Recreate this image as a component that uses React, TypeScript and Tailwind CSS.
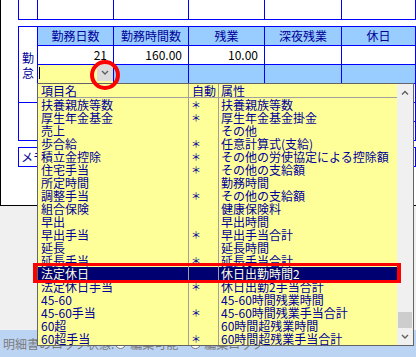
import React from 'react';

// 項目名 / 自動 / 属性
const items: [string, string, string][] = [
  ['扶養親族等数', '*', '扶養親族等数'],
  ['厚生年金基金', '*', '厚生年金基金掛金'],
  ['売上', '', 'その他'],
  ['歩合給', '*', '任意計算式(支給)'],
  ['積立金控除', '*', 'その他の労使協定による控除額'],
  ['住宅手当', '*', 'その他の支給額'],
  ['所定時間', '', '勤務時間'],
  ['調整手当', '*', 'その他の支給額'],
  ['組合保険', '', '健康保険料'],
  ['早出', '', '早出時間'],
  ['早出手当', '*', '早出手当合計'],
  ['延長', '', '延長時間'],
  ['延長手当', '*', '延長手当合計'],
  ['法定休日', '', '休日出勤時間2'],
  ['法定休日手当', '*', '休日出勤2手当合計'],
  ['45-60', '', '45-60時間残業時間'],
  ['45-60手当', '*', '45-60時間残業手当合計'],
  ['60超', '', '60時間超残業時間'],
  ['60超手当', '*', '60時間超残業手当合計'],
];

const selectedIndex = 13;

const headers = ['勤務日数', '勤務時間数', '残業', '深夜残業', '休日'];
const values = ['21', '160.00', '10.00', '', ''];

const Chevron = ({ up }: { up?: boolean }) => (
  <svg width="8" height="5" viewBox="0 0 8 5">
    <polyline
      points={up ? '1,4.5 4,1.5 7,4.5' : '1,1 4,4 7,1'}
      fill="none"
      stroke="#606060"
      strokeWidth="1.4"
    />
  </svg>
);

const Radio = () => (
  <span className="mt-[1px] block h-[11px] w-[11px] rounded-full border border-[#7a7a7a] bg-white" />
);

export default function App() {
  return (
    <div className="relative flex h-[357px] w-[416px] flex-col overflow-hidden bg-[#f0f0f0] font-['Noto_Sans_CJK_JP',sans-serif] text-[12px] leading-[13px]">
      {/* form panel */}
      <div className="h-[206px] border-b border-l border-black bg-white">
        {/* block above, cut off at the top */}
        <div className="ml-[17px] grid w-[398px] grid-cols-[18px_75px_74px_75px_76px_73px] gap-px bg-[#0000ff] px-px pb-px">
          {Array.from({ length: 6 }).map((_, i) => (
            <div key={i} className="h-[19px] bg-white" />
          ))}
        </div>

        {/* 勤怠 table */}
        <div className="ml-[17px] mt-[6px] grid w-[398px] auto-rows-[18px] grid-cols-[18px_75px_74px_75px_76px_73px] gap-px bg-[#0000ff] p-px">
          <div className="row-span-4 flex flex-col items-center justify-center bg-white pt-[1px] text-[#000099] leading-[15px]">
            <span>勤</span>
            <span>怠</span>
          </div>
          {headers.map((h) => (
            <div key={h} className="bg-[#99ccff] text-center leading-[18px] text-[#000099]">
              {h}
            </div>
          ))}
          {values.map((v, i) => (
            <div key={i} className="bg-white pr-[6px] text-right leading-[18px] text-black">
              {v}
            </div>
          ))}
          <div className="flex bg-[#ffff99]">
            <span className="ml-[1px] mt-[2px] h-[12px] w-px bg-black" />
            <div className="ml-auto flex h-[17px] w-[16px] -translate-y-px items-center justify-center bg-[#dcdcdc]">
              <Chevron />
            </div>
          </div>
          {Array.from({ length: 4 }).map((_, i) => (
            <div key={i} className="bg-[#99ccff]" />
          ))}
          {Array.from({ length: 5 }).map((_, i) => (
            <div key={i} className="bg-white" />
          ))}
          <div className="row-span-2 bg-white" />
          {Array.from({ length: 10 }).map((_, i) => (
            <div key={i} className="bg-white" />
          ))}
        </div>

        {/* memo */}
        <div className="ml-[17px] mt-[6px] h-[20px] w-[398px] border border-[#0000ff] pl-[2px] leading-[18px] text-[#000099]">
          メモ
        </div>
      </div>

      {/* status bar */}
      <div className="mt-auto flex h-[27px] items-start bg-[#bcd4f4] pl-[3px] pt-[7px] text-[#7a7a7a]">
        <span>明細書のロック状態:</span>
        <span className="ml-px">
          <Radio />
        </span>
        <span className="ml-[4px]">編集可能</span>
        <span className="ml-[12px]">
          <Radio />
        </span>
        <span className="ml-[3px]">編集ロック</span>
      </div>

      {/* dropdown list */}
      <div className="absolute left-[37px] top-[83px] flex h-[263px] w-[377px] border border-[#646464] bg-[#ffff99] text-[#000099]">
        <div className="flex-1">
          <div className="flex h-[14px] border-b border-[#a0a0a0]">
            <div className="w-[151px] border-r border-[#a0a0a0] pl-[3px]">項目名</div>
            <div className="w-[30px] border-r border-[#a0a0a0] pl-[3px]">自動</div>
            <div className="flex-1 pl-[2px]">属性</div>
          </div>
          {items.map(([name, auto, attr], i) => {
            const sel = i === selectedIndex;
            return (
              <div
                key={name}
                className={`flex h-[13px] ${sel ? 'bg-[#000070] text-[#ffffe0]' : ''}`}
              >
                <div className="w-[151px] border-r border-[#a0a0a0] pl-[3px]">{name}</div>
                <div className="w-[30px] border-r border-[#a0a0a0] pl-[2px] text-[10px]">
                  {auto ? '＊' : ''}
                </div>
                <div className="flex-1 whitespace-nowrap pl-[2px]">{attr}</div>
              </div>
            );
          })}
        </div>
        {/* scrollbar */}
        <div className="flex w-[16px] flex-col bg-[#f0f0f0]">
          <div className="flex h-[17px] items-center justify-center">
            <Chevron up />
          </div>
          <div className="flex flex-1 flex-col justify-end px-px">
            <div className="h-[16px] bg-[#cdcdcd]" />
          </div>
          <div className="flex h-[17px] items-center justify-center">
            <Chevron />
          </div>
        </div>
      </div>

      {/* annotations */}
      <div className="absolute left-[33px] top-[263px] h-[20px] w-[368px] border-x-4 border-y-[3px] border-[#ff0000]" />
      <div className="absolute left-[90px] top-[60px] h-[30px] w-[30px] rounded-full border-4 border-[#ff0000]" />
    </div>
  );
}
